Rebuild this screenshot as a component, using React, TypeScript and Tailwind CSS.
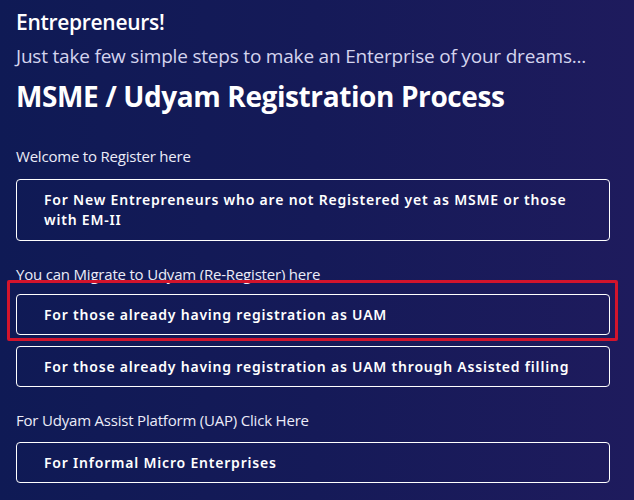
import React from "react";

const head = { fontFamily: '"Open Sans", "Noto Sans", sans-serif' };
const btnFont = { fontFamily: '"Noto Sans", "Open Sans", sans-serif' };

function Btn({ children, tall }: { children: React.ReactNode; tall?: boolean }) {
  return (
    <div
      className={`ml-4 w-[594px] rounded-[4px] border-[1.5px] border-white pl-[27px] pr-4 text-white font-semibold text-[14px] tracking-[0.8px] flex items-center ${tall ? "h-[62px] leading-[20px]" : "h-[41px]"}`}
      style={btnFont}
    >
      <span>{children}</span>
    </div>
  );
}

export default function App() {
  return (
    <div className="w-[634px] h-[500px] overflow-hidden bg-gradient-to-r from-[#0f1a55] via-[#151a58] to-[#1e1b5d] text-white relative">
      <div className="pt-[8px]" style={head}>
        <div className="px-4 text-[21px] font-semibold leading-[28px] tracking-[-0.3px]">Entrepreneurs!</div>
        <div className="px-4 mt-[7px] text-[19px] leading-[26px] text-[#d4d4ee] tracking-[-0.2px]">
          Just take few simple steps to make an Enterprise of your dreams...
        </div>
        <div className="px-4 mt-[9px] text-[28px] font-bold leading-[36px] tracking-[-0.4px]">
          MSME / Udyam Registration Process
        </div>
        <div className="px-4 mt-[32px] text-[15px] leading-[20px] text-[#ececf8] tracking-[-0.2px]">Welcome to Register here</div>
      </div>
      <div className="mt-[13px]">
        <Btn tall>
          For New Entrepreneurs who are not Registered yet as MSME or those
          <br />
          with EM-II
        </Btn>
      </div>
      <div className="px-4 mt-[23px] text-[15px] leading-[20px] text-[#ececf8] tracking-[-0.2px]" style={head}>
        You can Migrate to Udyam (Re-Register) here
      </div>
      <div className="relative mt-[10px]">
        <Btn>For those already having registration as UAM</Btn>
        <div className="absolute left-[7px] w-[611px] top-[-14px] bottom-[-6px] border-[3px] border-[#d3142c] rounded-[2px] pointer-events-none" />
      </div>
      <div className="mt-[11px]">
        <Btn>For those already having registration as UAM through Assisted filling</Btn>
      </div>
      <div className="px-4 mt-[23px] text-[15px] leading-[20px] text-[#ececf8] tracking-[-0.2px]" style={head}>
        For Udyam Assist Platform (UAP) Click Here
      </div>
      <div className="mt-[12px]">
        <Btn>For Informal Micro Enterprises</Btn>
      </div>
    </div>
  );
}
